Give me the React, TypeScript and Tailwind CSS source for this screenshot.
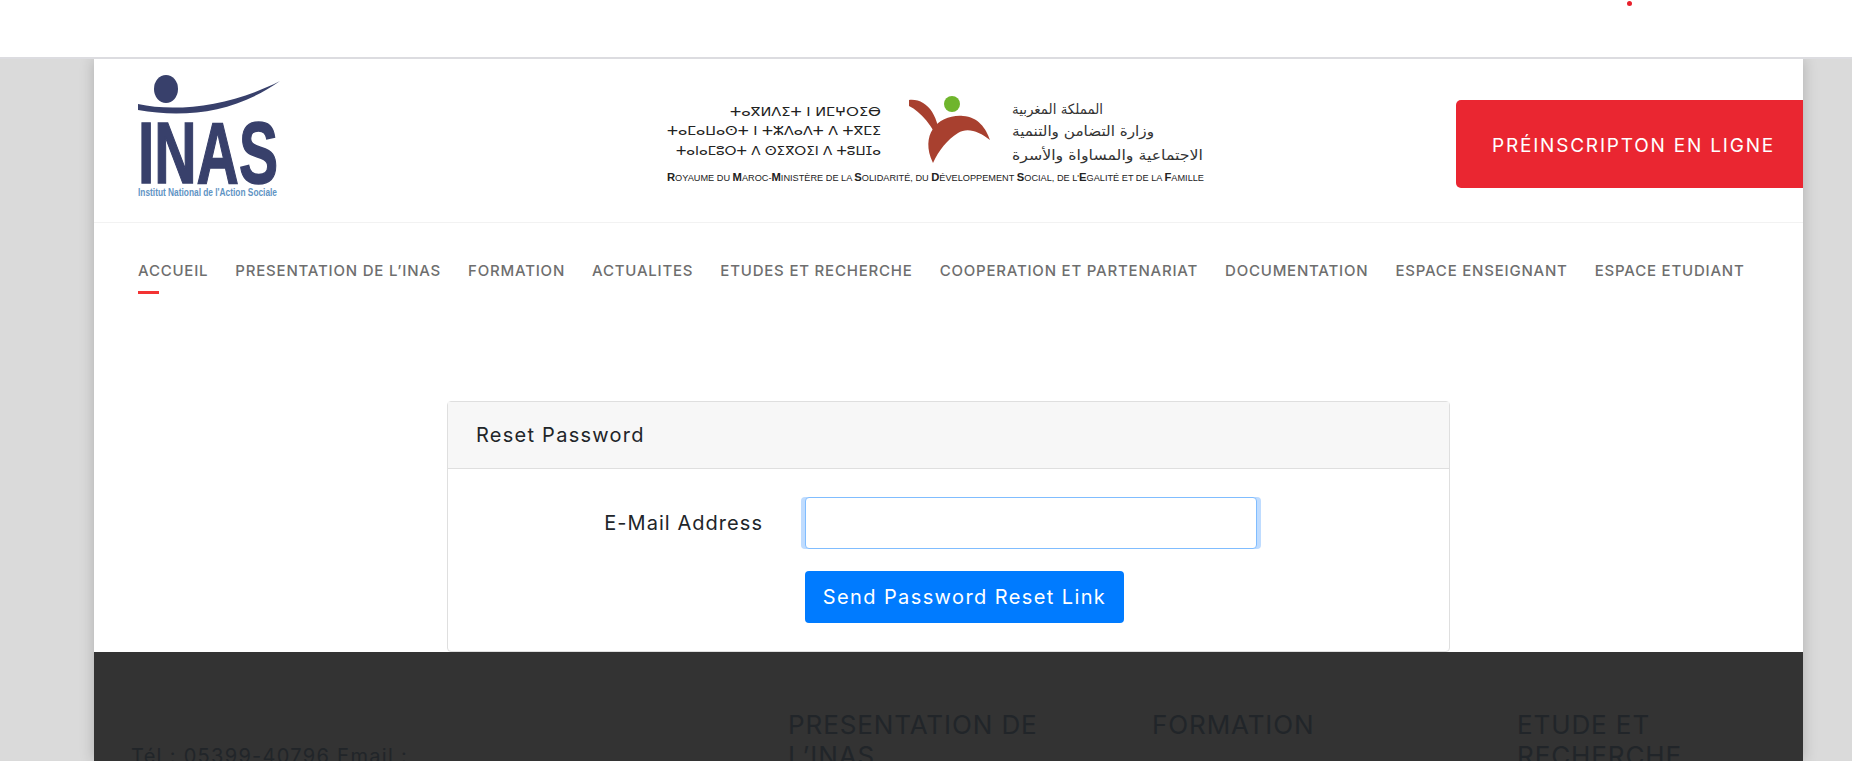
const NAV = [
  'ACCUEIL',
  'PRESENTATION DE L’INAS',
  'FORMATION',
  'ACTUALITES',
  'ETUDES ET RECHERCHE',
  'COOPERATION ET PARTENARIAT',
  'DOCUMENTATION',
  'ESPACE ENSEIGNANT',
  'ESPACE ETUDIANT',
]

function InasLogo() {
  return (
    <svg width="144" height="126" viewBox="0 0 144 126">
      <ellipse cx="28" cy="14" rx="12" ry="14" fill="#38406b" />
      <path d="M0 29 C40 38 95 30 142 6 C100 36 50 44 0 35 Z" fill="#38406b" />
      <text x="0" y="108" fontFamily="'Liberation Sans', sans-serif" fontWeight="700" fontSize="88" fill="#38406b" stroke="#38406b" strokeWidth="1.5" textLength="140" lengthAdjust="spacingAndGlyphs">
        INAS
      </text>
      <text x="0" y="121" fontFamily="'Liberation Sans', sans-serif" fontWeight="700" fontSize="10" fill="#5f94c4" textLength="139" lengthAdjust="spacingAndGlyphs">
        Institut National de l'Action Sociale
      </text>
    </svg>
  )
}

function MinistryLogo() {
  return (
    <svg width="540" height="100" viewBox="0 0 540 100">
      <g fontFamily="'DejaVu Sans', sans-serif" fontSize="13" fill="#222">
        <text x="63" y="26" textLength="151" lengthAdjust="spacingAndGlyphs">ⵜⴰⴳⵍⴷⵉⵜ ⵏ ⵍⵎⵖⵔⵉⴱ</text>
        <text x="0" y="45" textLength="214" lengthAdjust="spacingAndGlyphs">ⵜⴰⵎⴰⵡⴰⵙⵜ ⵏ ⵜⵣⴷⴰⴷⵜ ⴷ ⵜⴳⵎⵉ</text>
        <text x="9" y="65" textLength="205" lengthAdjust="spacingAndGlyphs">ⵜⴰⵏⴰⵎⵓⵔⵜ ⴷ ⵙⵉⴳⵔⵉⵏ ⴷ ⵜⵓⵡⵊⴰ</text>
      </g>
      <circle cx="285" cy="14" r="8" fill="#6fb52c" />
      <path d="M242 10 C260 8 273 26 273 54 C266 36 254 22 242 16 Z" fill="#a8402f" />
      <path d="M266 73 C252 44 272 24 296 26 C311 27 319 38 323 50 C312 41 300 37 291 43 C280 50 272 60 266 73 Z" fill="#a8402f" />
      <g fontFamily="'DejaVu Sans', sans-serif" fontSize="14" fill="#333">
        <text x="345" y="24" textLength="91" lengthAdjust="spacingAndGlyphs">المملكة المغربية</text>
        <text x="345" y="46" textLength="142" lengthAdjust="spacingAndGlyphs">وزارة التضامن والتنمية</text>
        <text x="345" y="70" textLength="191" lengthAdjust="spacingAndGlyphs">الاجتماعية والمساواة والأسرة</text>
      </g>
      <text x="0" y="91" fontFamily="'Liberation Sans', sans-serif" fontSize="9" fill="#222" textLength="537" lengthAdjust="spacingAndGlyphs">
        <tspan fontSize="11" fontWeight="700">R</tspan>OYAUME DU <tspan fontSize="11" fontWeight="700">M</tspan>AROC-<tspan fontSize="11" fontWeight="700">M</tspan>INISTÈRE DE LA <tspan fontSize="11" fontWeight="700">S</tspan>OLIDARITÉ, DU <tspan fontSize="11" fontWeight="700">D</tspan>ÉVELOPPEMENT <tspan fontSize="11" fontWeight="700">S</tspan>OCIAL, DE L'<tspan fontSize="11" fontWeight="700">E</tspan>GALITÉ ET DE LA <tspan fontSize="11" fontWeight="700">F</tspan>AMILLE
      </text>
    </svg>
  )
}

export default function App() {
  return (
    <div className="h-[761px] overflow-hidden bg-[#dadada] font-['Inter',sans-serif] text-[#212529]">
      {/* Top bar */}
      <div className="relative h-[59px] border-b-2 border-[#dcdce0] bg-white">
        <span className="absolute left-[1627px] top-[1px] h-[5px] w-[5px] rounded-full bg-[#e8202c]" />
      </div>

      <div className="ml-[94px] flex h-[702px] w-[1709px] flex-col overflow-hidden bg-white shadow-[0_0_14px_rgba(0,0,0,0.2)]">
        {/* Header */}
        <div className="flex h-[164px] shrink-0 items-start border-b border-[#f2f2f2]">
          <div className="ml-[44px] mt-[16px] w-[144px]">
            <InasLogo />
          </div>
          <div className="ml-[385px] mt-[31px]">
            <MinistryLogo />
          </div>
          <a className="ml-auto mt-[41px] flex h-[88px] w-[347px] items-center rounded-l-[5px] bg-[#ea2631] pl-[36px] pt-[4px] text-[19px] tracking-[1.8px] text-white">
            PRÉINSCRIPTON EN LIGNE
          </a>
        </div>

        {/* Nav */}
        <div className="flex gap-[27px] pl-[44px] pt-[37px] text-[15px] font-medium tracking-[0.79px] text-[#6e6e6e]">
          {NAV.map((item, i) => (
            <div key={item} className="relative whitespace-nowrap">
              {item}
              {i === 0 && <span className="absolute bottom-[-11px] left-0 h-[3px] w-[21px] bg-[#f33333]" />}
            </div>
          ))}
        </div>

        {/* Reset password card */}
        <div className="ml-[353px] mt-[118px] h-[251px] w-[1003px] shrink-0 rounded-[4px] border border-[#dfdfdf]">
          <div className="flex h-[67px] items-center border-b border-[#dfdfdf] bg-[#f7f7f7] pl-[28px] text-[20px] tracking-[1.25px]">
            Reset Password
          </div>
          <div className="pt-[28px]">
            <div className="flex items-center gap-[42px]">
              <label className="w-[315px] text-right text-[20px] tracking-[1.05px]">E-Mail Address</label>
              <input className="h-[52px] w-[452px] rounded-[4px] border border-[#80bdff] bg-white shadow-[-4px_0_0_0_#bfdcff,4px_0_0_0_#bfdcff] outline-none" />
            </div>
            <button className="ml-[357px] mt-[22px] h-[52px] w-[319px] rounded-[4px] bg-[#007bff] text-[20px] tracking-[1.4px] text-white">
              Send Password Reset Link
            </button>
          </div>
        </div>

        {/* Footer */}
        <div className="flex-1 bg-[#333333] pt-[57px]">
          <div className="flex items-start">
            <p className="ml-[37px] mt-[32px] w-[657px] text-[20px] tracking-[1.3px]">Tél : 05399-40796 Email :</p>
            <h4 className="w-[364px] pr-[110px] text-[26px] leading-[31px] tracking-[0.9px]">PRESENTATION DE L’INAS</h4>
            <h4 className="w-[365px] text-[26px] leading-[31px] tracking-[0.9px]">FORMATION</h4>
            <h4 className="w-[190px] text-[26px] leading-[31px] tracking-[0.9px]">ETUDE ET RECHERCHE</h4>
          </div>
        </div>
      </div>
    </div>
  )
}
